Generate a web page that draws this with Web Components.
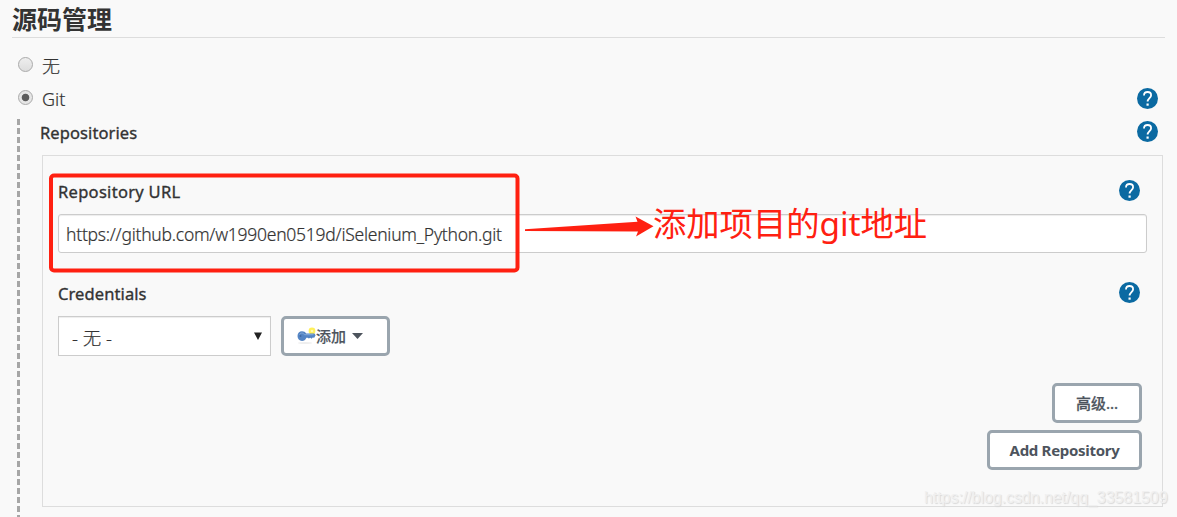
<!DOCTYPE html>
<html lang="zh">
<head>
<meta charset="utf-8">
<title>源码管理</title>
<style>
    body {
        margin: 0;
        height: 517px;
        overflow: hidden;
        background: #f9f9f9;
        color: #333;
        font-family: "Noto Sans", "Noto Sans CJK SC", sans-serif;
    }
</style>
</head>
<body>
<scm-section heading="源码管理">
    <radio-row>无</radio-row>
    <radio-row checked help>Git</radio-row>
    <git-config></git-config>
</scm-section>
<red-note></red-note>
<water-mark>https://blog.csdn.net/qq_33581509</water-mark>

<script>
class HelpIcon extends HTMLElement {
    constructor () {
        super();
        this.attachShadow({ mode: 'open' });
        this.shadowRoot.innerHTML = `
            <style>
                :host { display: block; width: 21px; height: 21px; flex: none; }
                svg { display: block; }
            </style>
            <svg width="21" height="21" viewBox="0 0 21 21">
                <circle cx="10.5" cy="10.5" r="10.5" fill="#0b6aa2"/>
                <path d="M7 7.500C7 5.300 8.500 4 10.600 4s3.500 1.300 3.500 3.200c0 2.600-3.500 3.200-3.500 6.400" fill="none" stroke="#fff" stroke-width="1.800"/>
                <rect x="9.500" y="15.500" width="2.200" height="2.200" fill="#fff"/>
            </svg>
        `;
    }
}

class ScmSection extends HTMLElement {
    constructor () {
        super();
        this.attachShadow({ mode: 'open' });
        this.shadowRoot.innerHTML = `
            <style>
                :host { display: block; padding: 0 12px; }
                h2 {
                    box-sizing: border-box;
                    height: 38px;
                    margin: 0 0 10px;
                    border-bottom: 1px solid #ddd;
                    font-size: 25px;
                    line-height: 39px;
                    font-weight: 700;
                }
            </style>
            <h2></h2>
            <slot></slot>
        `;
    }
    connectedCallback() {
        this.shadowRoot.querySelector('h2').textContent = this.getAttribute('heading');
    }
}

class RadioRow extends HTMLElement {
    constructor () {
        super();
        this.attachShadow({ mode: 'open' });
        this.shadowRoot.innerHTML = `
            <style>
                :host {
                    display: flex;
                    height: 33px;
                    padding: 0 7px 0 6px;
                    font-size: 18px;
                    line-height: 33px;
                    font-weight: 300;
                    -webkit-text-stroke: .2px #333;
                }
                i {
                    box-sizing: border-box;
                    width: 15px;
                    height: 15px;
                    margin: 9px 9px 0 0;
                    border: 1px solid #aaa;
                    border-radius: 50%;
                    background: linear-gradient(#eee, #ddd);
                }
                :host([checked]) i {
                    background: radial-gradient(circle, #5c5c5c 3.4px, #e6e6e6 4.2px);
                }
                .label { flex: 1; padding-top: 2px; }
                help-icon { display: none; margin-top: 7px; }
                :host([help]) help-icon { display: block; }
            </style>
            <i></i>
            <span class="label"><slot></slot></span>
            <help-icon></help-icon>
        `;
    }
}

class FieldLabel extends HTMLElement {
    constructor () {
        super();
        this.attachShadow({ mode: 'open' });
        this.shadowRoot.innerHTML = `
            <style>
                :host {
                    display: flex;
                    align-items: center;
                    justify-content: space-between;
                    height: 21px;
                    font-size: 16.5px;
                    line-height: 21px;
                    -webkit-text-stroke: .35px #333;
                }
                span { letter-spacing: var(--track, .1px); padding-top: 1px; }
            </style>
            <span><slot></slot></span>
            <help-icon></help-icon>
        `;
    }
}

class LineButton extends HTMLElement {
    constructor () {
        super();
        this.attachShadow({ mode: 'open' });
        this.shadowRoot.innerHTML = `
            <style>
                :host {
                    display: flex;
                    box-sizing: border-box;
                    align-items: center;
                    justify-content: center;
                    height: 40px;
                    border: 3px solid #9aa5ae;
                    border-radius: 5px;
                    background: #fff;
                    color: #4d545d;
                    font-size: 15px;
                    font-weight: 700;
                    line-height: 34px;
                    white-space: nowrap;
                }
            </style>
            <slot></slot>
        `;
    }
}

class GitConfig extends HTMLElement {
    constructor () {
        super();
        this.attachShadow({ mode: 'open' });
        this.shadowRoot.innerHTML = `
            <style>
                * { box-sizing: border-box; }
                :host {
                    display: flex;
                    gap: 20px;
                    padding: 5px 0 0 5px;
                }
                .rail {
                    width: 3px;
                    height: 398px;
                    background: repeating-linear-gradient(#a6a6a6 0 6px, transparent 6px 9px);
                }
                .body { flex: 1; padding-top: 2px; }
                .repos { padding-right: 7px; }
                .panel {
                    height: 352px;
                    margin: 13px 2px 0 2px;
                    padding: 24px 15px 0;
                    border: 1px solid #ddd;
                }
                .panel field-label { padding-right: 7px; }
                .url-label { --track: .3px; }
                .url {
                    height: 39px;
                    margin: 13px 0 29px;
                    padding-left: 7px;
                    border: 1px solid #ccc;
                    border-radius: 3px;
                    background: #fff;
                    box-shadow: inset 0 1px 1px #00000013;
                    font-size: 17.5px;
                    font-weight: 300;
                    line-height: 39px;
                    letter-spacing: -.25px;
                    -webkit-text-stroke: .2px #333;
                }
                .row { display: flex; gap: 10px; margin-top: 13px; }
                .select {
                    display: flex;
                    align-items: center;
                    justify-content: space-between;
                    width: 213px;
                    height: 40px;
                    padding: 2px 8px 0 13px;
                    border: 1px solid #ccc;
                    background: #fff;
                    box-shadow: inset 0 1px 1px #00000013;
                    font-size: 18.5px;
                    font-weight: 300;
                    -webkit-text-stroke: .2px #333;
                }
                .select svg { margin-top: -3px; }
                .add { width: 109px; padding-right: 11px; font-weight: 500; -webkit-text-stroke: .15px #4d545d; }
                .caret { margin-left: 6px; }
                .actions {
                    display: flex;
                    flex-direction: column;
                    align-items: flex-end;
                    gap: 7px;
                    padding: 27px 5px 0 0;
                }
                .adv { width: 90px; font-weight: 500; -webkit-text-stroke: .25px #4d545d; }
                .new { width: 155px; letter-spacing: -.3px; }
            </style>
            <div class="rail"></div>
            <div class="body">
                <field-label class="repos">Repositories</field-label>
                <div class="panel">
                    <field-label class="url-label">Repository URL</field-label>
                    <div class="url"><span>https://github.com/w1990en0519d/iSelenium_Python.git</span></div>
                    <field-label>Credentials</field-label>
                    <div class="row">
                        <div class="select">
                            <span>- 无 -</span>
                            <svg width="8" height="8"><path d="M0 .5h8L4 8z" fill="#222"/></svg>
                        </div>
                        <line-button class="add">
                            <svg width="19" height="18" viewBox="0 0 19 18">
                                <ellipse cx="8" cy="16" rx="7" ry="1" fill="#eee"/>
                                <circle cx="15" cy="4" r="3.400" fill="#fff05a"/>
                                <circle cx="15" cy="4" r="1.300" fill="#fff9b0"/>
                                <path d="M.500 9C.500 6 2.500 4.300 5 4.300c2 0 3.200.900 4.200 2.200h8.200l1.200 1.700-1.400 2.600-1.500-.400-1 1.300-1.500-.900-1.300.800-1.300-.800H9.400c-1 2.200-2.300 3.100-4.400 3.100C2.400 13.900.500 12 .500 9z" fill="#5384c4"/>
                                <path d="M2.500 7.600C3.600 5.500 6 5.600 7.500 7.700h9" fill="none" stroke="#83a9d8"/>
                                <circle cx="3.500" cy="9" r="1" fill="#44699f"/>
                            </svg>
                            <span>添加</span>
                            <svg class="caret" width="11" height="6"><path d="M0 0h11L5.500 6z" fill="#4d545d"/></svg>
                        </line-button>
                    </div>
                    <div class="actions">
                        <line-button class="adv">高级...</line-button>
                        <line-button class="new">Add Repository</line-button>
                    </div>
                </div>
            </div>
        `;
    }
}

// red frame, arrow and caption lying over the form
class RedNote extends HTMLElement {
    constructor () {
        super();
        this.attachShadow({ mode: 'open' });
        this.shadowRoot.innerHTML = `
            <style>
                :host { position: absolute; left: 0; top: 0; color: #ff2011; }
                svg { display: block; }
                span {
                    position: absolute;
                    left: 653px;
                    top: 199px;
                    font-size: 33.3px;
                    line-height: 48px;
                    white-space: nowrap;
                }
            </style>
            <svg width="660" height="290">
                <rect x="51" y="175.500" width="466.500" height="95" rx="3" fill="none" stroke="currentColor" stroke-width="4"/>
                <path d="M525 229.300L637.500 221.700 635.500 216.500 653.500 226.300 636 236.500 638 231.500 525 231z" fill="currentColor"/>
            </svg>
            <span>添加项目的git地址</span>
        `;
    }
}

class WaterMark extends HTMLElement {
    constructor () {
        super();
        this.attachShadow({ mode: 'open' });
        this.shadowRoot.innerHTML = `
            <style>
                :host {
                    position: absolute;
                    left: 924px;
                    top: 488px;
                    color: #f0f0f0;
                    font: 16px/20px "Liberation Sans", sans-serif;
                    letter-spacing: -.06px;
                    text-shadow: 1px 1px 1px #d8d8d8;
                    white-space: nowrap;
                }
            </style>
            <slot></slot>
        `;
    }
}

customElements.define('help-icon', HelpIcon);
customElements.define('scm-section', ScmSection);
customElements.define('radio-row', RadioRow);
customElements.define('field-label', FieldLabel);
customElements.define('line-button', LineButton);
customElements.define('git-config', GitConfig);
customElements.define('red-note', RedNote);
customElements.define('water-mark', WaterMark);
</script>
</body>
</html>
